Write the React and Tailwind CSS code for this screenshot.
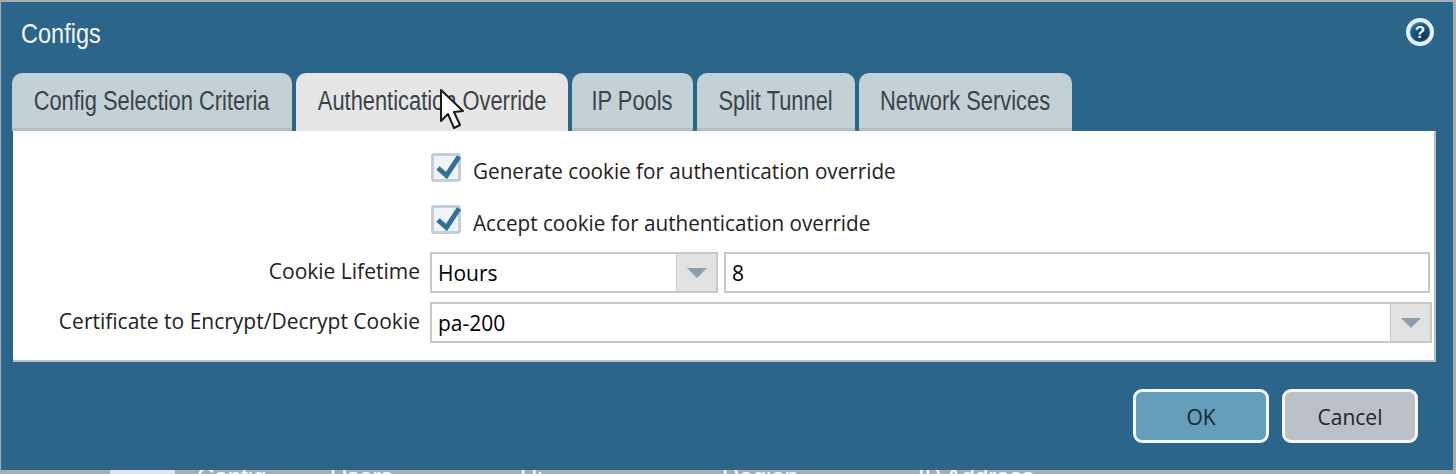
const tabs = [
  { label: 'Config Selection Criteria', width: 'w-[280px]' },
  { label: 'Authentication Override', width: 'w-[272px]', active: true },
  { label: 'IP Pools', width: 'w-[121px]' },
  { label: 'Split Tunnel', width: 'w-[158px]' },
  { label: 'Network Services', width: 'w-[213px]' },
];

const Arrow = () => (
  <div className="flex w-[40px] shrink-0 items-center justify-center border-l border-[#c8c8c8] bg-[#e2e2e2]">
    <div className="h-0 w-0 border-x-[10px] border-t-[10px] border-x-transparent border-t-[#8a9fae]" />
  </div>
);

const CheckRow = ({ label, className }) => (
  <div className={`flex items-start ${className}`}>
    <div className="relative h-[29px] w-[30px] rounded-[3px] border-[3px] border-[#c3cfd8] bg-[#f1f4f7]">
      <svg viewBox="0 0 32 30" className="absolute -left-[3px] -top-[3px] h-[30px] w-[32px] overflow-visible">
        <path d="M7 15 L15.5 22.5 L28 3.5" fill="none" stroke="#2f7199" strokeWidth="5" />
      </svg>
    </div>
    <span className="ml-[12px] mt-[6px] origin-left scale-x-[0.94] whitespace-nowrap text-[22px] leading-[22px] text-[#222]">
      {label}
    </span>
  </div>
);

export default function App() {
  return (
    <div className="h-[474px] w-[1456px] overflow-hidden bg-[#a9adb0] font-['Open_Sans','Liberation_Sans',sans-serif]">
      <div className="relative ml-[1px] mt-[2px] flex h-[468px] w-[1452px] flex-col bg-[#2b6589]">
        <div className="flex h-[71px] items-start justify-between pl-[20px] pr-[18px]">
          <span className="mt-[15px] origin-left scale-x-[0.84] font-['Liberation_Sans',sans-serif] text-[28px] leading-[34px] text-[#f2f7fa]">
            Configs
          </span>
          <svg viewBox="0 0 30 30" className="mt-[15px] h-[30px] w-[30px]">
            <defs>
              <radialGradient id="help" cx="62%" cy="68%" r="75%">
                <stop offset="0%" stopColor="#0c3554" />
                <stop offset="65%" stopColor="#1f5c84" />
                <stop offset="100%" stopColor="#6fa5c4" />
              </radialGradient>
            </defs>
            <circle cx="15" cy="15" r="12" fill="url(#help)" stroke="#e3f2fa" strokeWidth="4" />
            <text x="15" y="21" textAnchor="middle" fontSize="17" fontWeight="700" fontFamily="Liberation Sans" fill="#e9f4fa">
              ?
            </text>
          </svg>
        </div>

        <div className="flex h-[58px] pl-[11px]">
          {tabs.map((tab) => (
            <div
              key={tab.label}
              className={`mr-[4px] flex ${tab.width} items-center justify-center rounded-t-[10px] border-b-[3px] pt-[1px] font-['Liberation_Sans',sans-serif] text-[27px] text-[#3a4349] ${
                tab.active ? 'border-[#e6e6e6] bg-[#e6e6e6]' : 'border-[#b3bfc3] bg-[#c3d1d6]'
              }`}
            >
              <span className="scale-x-[0.81] whitespace-nowrap">{tab.label}</span>
            </div>
          ))}
        </div>

        <div className="ml-[12px] flex h-[231px] w-[1423px] flex-col border-r-2 border-b-2 border-[#b9c1c6] bg-white">
          <CheckRow label="Generate cookie for authentication override" className="ml-[418px] mt-[22px]" />
          <CheckRow label="Accept cookie for authentication override" className="ml-[418px] mt-[23px]" />
          <div className="mt-[18px] flex h-[41px] items-center">
            <span className="w-[407px] -translate-y-[1px] text-right text-[21px] text-[#222]">Cookie Lifetime</span>
            <div className="ml-[10px] flex h-[41px] w-[288px] border-[2px] border-[#c8c8c8]">
              <span className="flex-1 pl-[6px] text-[21px] leading-[39px] text-black">Hours</span>
              <Arrow />
            </div>
            <div className="ml-[6px] h-[41px] w-[706px] border-[2px] border-[#c8c8c8] pl-[6px] text-[21px] leading-[39px] text-black">
              8
            </div>
          </div>
          <div className="mt-[9px] flex h-[41px] items-center">
            <span className="w-[407px] -translate-y-[1px] text-right text-[21px] text-[#222]">Certificate to Encrypt/Decrypt Cookie</span>
            <div className="ml-[10px] flex h-[41px] w-[1002px] border-[2px] border-[#c8c8c8]">
              <span className="flex-1 pl-[6px] text-[21px] leading-[39px] text-black">pa-200</span>
              <Arrow />
            </div>
          </div>
        </div>

        <div className="mt-[27px] flex justify-end gap-[13px] pr-[35px]">
          <button className="h-[54px] w-[136px] rounded-[9px] border-[3px] border-[#f4f8fa] bg-[#659dbb] pt-[3px] text-[21px] text-[#142733]">
            OK
          </button>
          <button className="h-[54px] w-[136px] rounded-[9px] border-[3px] border-[#f4f8fa] bg-[#bcc1c7] pt-[3px] text-[21px] text-[#1c2329]">
            Cancel
          </button>
        </div>

        <svg viewBox="0 0 26 44" className="absolute left-[438px] top-[86px] h-[44px] w-[26px]">
          <path
            d="M2 2 L2 33 L9 26 L15 40 L21 37 L15 24 L24 23 Z"
            fill="#fff"
            stroke="#1a1a1a"
            strokeWidth="2"
            strokeLinejoin="round"
          />
        </svg>
      </div>

      <div className="flex h-[4px] overflow-hidden pl-[110px] font-['Liberation_Sans',sans-serif] text-[24px] leading-[24px] text-white">
        <div className="h-[4px] w-[65px] bg-[#e4e6e8]" />
        <span className="ml-[22px] w-[133px] -translate-y-[5px]">Config</span>
        <span className="w-[190px] -translate-y-[5px]">Users</span>
        <span className="w-[202px] -translate-y-[5px]">Hi</span>
        <span className="w-[196px] -translate-y-[5px]">Region</span>
        <span className="-translate-y-[5px] whitespace-nowrap">IP Address</span>
      </div>
    </div>
  );
}
